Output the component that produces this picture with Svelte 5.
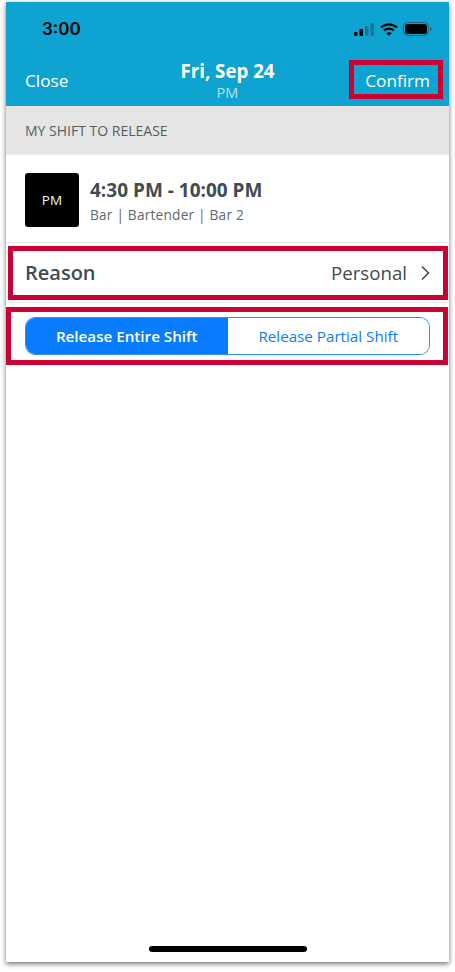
<script>
  let shift = { badge: "PM", time: "4:30 PM - 10:00 PM", place: "Bar | Bartender | Bar 2" };
  let mode = "entire";
</script>

<div class="page">
  <div class="phone">
    <header class="top">
      <div class="status">
        <span class="clock">3:00</span>
        <div class="status-icons">
          <svg width="21" height="13" viewBox="0 0 21 13">
            <rect x="0" y="9" width="3.5" height="4" rx="1" fill="#000" />
            <rect x="5.5" y="6" width="3.5" height="7" rx="1" fill="#000" />
            <rect x="11" y="3" width="3.5" height="10" rx="1" fill="#000" opacity="0.25" />
            <rect x="16.5" y="0" width="3.5" height="13" rx="1" fill="#000" opacity="0.25" />
          </svg>
          <svg width="18" height="13" viewBox="0 0 18 13" fill="none" stroke="#000" stroke-width="2.1">
            <path d="M1 4.6C5.6 .3 12.4 .3 17 4.6" />
            <path d="M4 7.6C6.8 5 11.2 5 14 7.6" />
            <path d="M9 12.8 6.3 10.2C7.9 8.9 10.1 8.9 11.7 10.2Z" fill="#000" stroke="none" />
          </svg>
          <svg width="29" height="14" viewBox="0 0 29 14">
            <rect x="0.5" y="0.5" width="25" height="13" rx="4" fill="none" stroke="#000" stroke-opacity="0.35" />
            <rect x="2" y="2" width="22" height="10" rx="2.5" fill="#000" />
            <path d="M27 5v4c.8-.3 1.400-1.100 1.400-2s-.6-1.700-1.400-2Z" fill="#000" opacity="0.4" />
          </svg>
        </div>
      </div>
      <div class="nav">
        <span class="nav-btn">Close</span>
        <div class="title">
          <strong>Fri, Sep 24</strong>
          <span>PM</span>
        </div>
        <span class="nav-btn right">Confirm</span>
      </div>
    </header>

    <div class="section">MY SHIFT TO RELEASE</div>

    <div class="shift">
      <div class="badge">{shift.badge}</div>
      <div class="info">
        <div class="time">{shift.time}</div>
        <div class="place">{shift.place}</div>
      </div>
    </div>

    <div class="reason">
      <span class="label">Reason</span>
      <span class="value">Personal</span>
      <svg class="chev" width="11" height="16" viewBox="0 0 11 16" fill="none" stroke="#414b50" stroke-width="1.600">
        <path d="M2 1.500 8.500 8 2 14.500" />
      </svg>
    </div>

    <div class="toggle-row">
      <div class="toggle">
        <button class:on={mode === "entire"}>Release Entire Shift</button>
        <button class:on={mode === "partial"}>Release Partial Shift</button>
      </div>
    </div>

    <div class="home"></div>

    <div class="mark mark-confirm"></div>
    <div class="mark mark-reason"></div>
    <div class="mark mark-toggle"></div>
  </div>
</div>

<style>
  :global(body) {
    margin: 0;
    background: #fff;
  }
  .page {
    width: 455px;
    height: 972px;
    padding: 2px 6px 0 6px;
    box-sizing: border-box;
    font-family: "Open Sans", sans-serif;
  }
  .phone {
    position: relative;
    width: 443px;
    height: 960px;
    background: #fff;
    display: flex;
    flex-direction: column;
    box-shadow: 0 2px 5px rgba(0, 0, 0, 0.55);
  }
  .top {
    background: #0fa3d1;
    height: 104px;
    flex-shrink: 0;
  }
  .status {
    display: flex;
    justify-content: space-between;
    align-items: center;
    height: 54px;
    padding: 0 17px 0 36px;
  }
  .clock {
    font-family: Inter, sans-serif;
    font-size: 17px;
    font-weight: 600;
    color: #000;
  }
  .status-icons {
    display: flex;
    align-items: center;
    gap: 5px;
  }
  .nav {
    display: grid;
    grid-template-columns: 1fr auto 1fr;
    align-items: center;
    padding: 0 19px;
    height: 50px;
  }
  .nav-btn {
    color: #fff;
    font-size: 17.200px;
    font-weight: 500;
    line-height: 24px;
  }
  .right {
    text-align: right;
  }
  .title {
    display: flex;
    flex-direction: column;
    align-items: center;
    color: #fff;
    margin-top: -2px;
  }
  .title strong {
    font-size: 18.700px;
    font-weight: 700;
    line-height: 25px;
  }
  .title span {
    font-size: 14.500px;
    line-height: 19px;
    color: #b5e2f2;
  }
  .section {
    background: #e5e5e5;
    height: 49px;
    flex-shrink: 0;
    display: flex;
    align-items: center;
    padding-left: 19px;
    font-size: 14px;
    color: #565e62;
    box-sizing: border-box;
    border-bottom: 1px solid #eee;
  }
  .shift {
    height: 88px;
    flex-shrink: 0;
    display: flex;
    align-items: center;
    gap: 11px;
    padding: 3px 0 0 19px;
    box-sizing: border-box;
    border-bottom: 1px solid #e8e8e8;
  }
  .badge {
    width: 54px;
    height: 54px;
    border-radius: 3px;
    background: #000;
    color: #f2f2f2;
    font-size: 13.500px;
    display: flex;
    align-items: center;
    justify-content: center;
  }
  .info {
    display: flex;
    flex-direction: column;
    gap: 3px;
    margin-top: 1px;
  }
  .time {
    font-size: 19px;
    font-weight: 700;
    line-height: 25px;
    color: #414b50;
  }
  .place {
    font-size: 13.700px;
    line-height: 18px;
    letter-spacing: 0.2px;
    color: #5f686c;
  }
  .reason {
    height: 60px;
    flex-shrink: 0;
    display: flex;
    align-items: center;
    padding: 0 18px 0 19px;
    box-sizing: border-box;
    border-bottom: 1px solid #e8e8e8;
    color: #414b50;
  }
  .label {
    font-size: 20px;
    font-weight: 600;
    flex: 1;
  }
  .value {
    font-size: 18.700px;
    margin-right: 13px;
  }
  .toggle-row {
    padding: 14px 19px 0;
  }
  .toggle {
    display: flex;
    height: 38px;
    border: 1.500px solid #2a8cfb;
    border-radius: 10px;
    overflow: hidden;
    box-sizing: border-box;
  }
  .toggle button {
    flex: 1;
    border: 0;
    padding: 0;
    background: #fff;
    color: #0a7cff;
    font-family: inherit;
    font-size: 15.200px;
  }
  .toggle button.on {
    background: #0a7cff;
    color: #fff;
    font-weight: 600;
  }
  .home {
    position: absolute;
    left: 143px;
    bottom: 10px;
    width: 158px;
    height: 6px;
    border-radius: 3px;
    background: #000;
  }
  .mark {
    position: absolute;
    border: 5px solid #cb0033;
    box-sizing: border-box;
  }
  .mark-confirm {
    left: 343px;
    top: 58px;
    width: 94px;
    height: 39px;
  }
  .mark-reason {
    left: 2px;
    top: 244px;
    width: 440px;
    height: 54px;
  }
  .mark-toggle {
    left: 0;
    top: 305px;
    width: 442px;
    height: 58px;
  }
</style>
